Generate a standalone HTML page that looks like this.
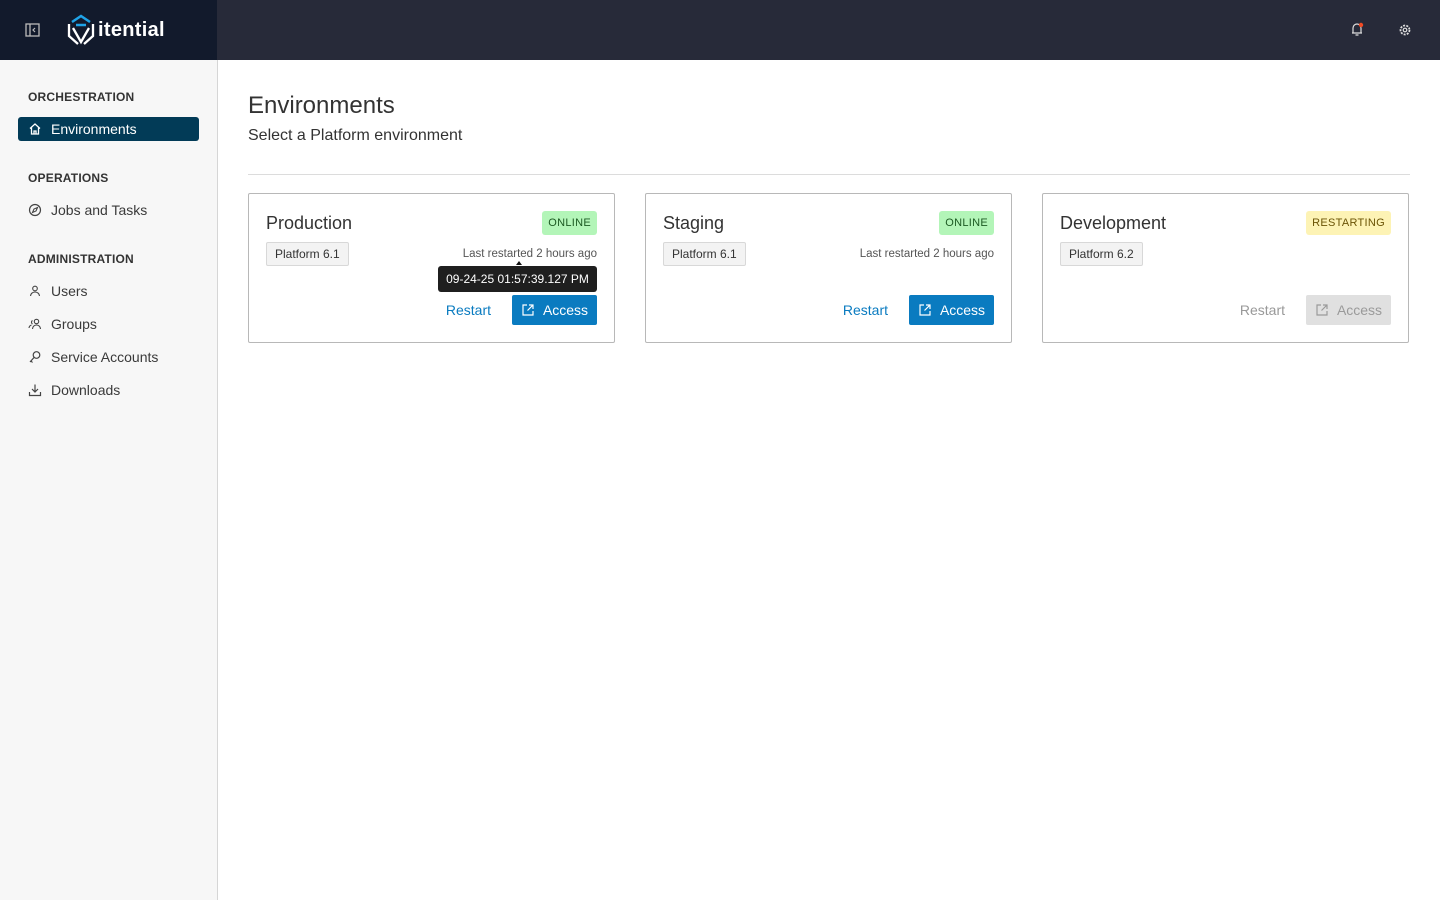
<!DOCTYPE html>
<html><head><meta charset="utf-8"><style>
*{box-sizing:border-box;margin:0;padding:0}
body{width:1440px;height:900px;position:relative;font-family:"Liberation Sans",sans-serif;background:#fff;color:#333;overflow:hidden}
.a{position:absolute;white-space:nowrap}
.top{left:0;top:0;width:1440px;height:60px;background:#272a39}
.topl{left:0;top:0;width:217px;height:60px;background:#121a2c}
.side{left:0;top:60px;width:218px;height:840px;background:#f7f7f7;border-right:1px solid #d6d6d6}
.sec{left:28px;font-size:12px;font-weight:bold;color:#333;letter-spacing:.2px}
.item{left:28px;font-size:14px;color:#3a3a3a;display:flex;align-items:center;gap:9px}
.card{top:193px;width:367px;height:150px;border:1px solid #b8b8b8;border-radius:2px;background:#fff}
.card h2{position:absolute;left:17px;top:19px;font-size:18px;font-weight:normal;color:#333}
.tag{position:absolute;left:17px;top:48px;height:24px;padding:0 8px;border:1px solid #d8d8d8;background:#f3f3f3;border-radius:2px;font-size:12px;line-height:22px;color:#333}
.badge{position:absolute;right:17px;top:17px;height:24px;padding:0 6px;border-radius:3px;font-size:11px;line-height:24px;letter-spacing:.3px}
.lr{position:absolute;right:17px;top:54px;font-size:11.5px;color:#555}
.restart{position:absolute;right:123px;top:108px;font-size:14px;color:#0a7bc0}
.btn{position:absolute;right:17px;top:101px;width:85px;height:30px;border-radius:2px;background:#0a7bc0;color:#fff;font-size:14px;display:flex;align-items:center;justify-content:center;gap:8px}
</style></head><body>
<div class="a top"></div><div class="a topl"></div>
<svg class="a" style="left:25px;top:23px" width="15" height="14" viewBox="0 0 15 14"><rect x="1" y="1" width="13" height="12" fill="none" stroke="#bbb" stroke-width="1.3"/><line x1="5" y1="1" x2="5" y2="13" stroke="#bbb" stroke-width="1.3"/><path d="M10 5 L8 7 L10 9" fill="none" stroke="#bbb" stroke-width="1.2"/></svg>
<svg class="a" style="left:66px;top:14px" width="30" height="32" viewBox="0 0 30 32"><path d="M6 8 L15 2 L24 8" fill="none" stroke="#1fa3e8" stroke-width="2.5"/><path d="M10 11 H20" stroke="#1fa3e8" stroke-width="2.5"/><path d="M3 10 V22 L12 30 M27 10 V22 L18 30 M7 14 L15 28 L23 14" fill="none" stroke="#fff" stroke-width="2.3"/></svg>
<div class="a" style="left:98px;top:19px;font-size:20px;color:#fff;font-weight:bold;letter-spacing:.3px">itential</div>
<svg class="a" style="left:1350px;top:22px" width="14" height="15" viewBox="0 0 14 15"><path d="M3 11 V6 a4 4 0 0 1 8 0 V11 H2 H12 M5.5 13 H8.5" fill="none" stroke="#ddd" stroke-width="1.2"/><circle cx="11" cy="3" r="2.2" fill="#f04a24"/></svg>
<svg class="a" style="left:1398px;top:23px" width="14" height="14" viewBox="0 0 14 14"><circle cx="7" cy="7" r="4.5" fill="none" stroke="#ddd" stroke-width="1.8" stroke-dasharray="2 1.2"/><circle cx="7" cy="7" r="1.8" fill="none" stroke="#ddd" stroke-width="1.2"/></svg>

<div class="a side"></div>
<div class="a sec" style="top:90px">ORCHESTRATION</div>
<div class="a" style="left:18px;top:117px;width:181px;height:24px;background:#023b57;border-radius:3px"></div>
<div class="a item" style="top:121px;color:#fff"><svg width="14" height="14" viewBox="0 0 14 14"><path d="M2 6.5 L7 2 L12 6.5 M3.5 5.5 V12 H10.5 V5.5 M6 12 V9 H8 V12" fill="none" stroke="#fff" stroke-width="1.3"/></svg>Environments</div>
<div class="a sec" style="top:171px">OPERATIONS</div>
<div class="a item" style="top:202px"><svg width="14" height="14" viewBox="0 0 14 14"><circle cx="7" cy="7" r="5.5" fill="none" stroke="#444" stroke-width="1.2"/><path d="M9.5 4.5 L8 8 L4.5 9.5 L6 6 Z" fill="none" stroke="#444" stroke-width="1.1"/></svg>Jobs and Tasks</div>
<div class="a sec" style="top:252px">ADMINISTRATION</div>
<div class="a item" style="top:283px"><svg width="14" height="14" viewBox="0 0 14 14"><circle cx="7" cy="4.5" r="2.3" fill="none" stroke="#444" stroke-width="1.1"/><path d="M2.5 12 a4.5 4 0 0 1 9 0" fill="none" stroke="#444" stroke-width="1.1"/></svg>Users</div>
<div class="a item" style="top:316px"><svg width="14" height="14" viewBox="0 0 14 14"><circle cx="8.5" cy="4.5" r="2.2" fill="none" stroke="#444" stroke-width="1.1"/><path d="M4.5 12 a4 4 0 0 1 8 0 M4.5 3.5 a2 2 0 0 0 0 3.5 M1 11 a3.5 3.5 0 0 1 2.5-3" fill="none" stroke="#444" stroke-width="1.1"/></svg>Groups</div>
<div class="a item" style="top:349px"><svg width="14" height="14" viewBox="0 0 14 14"><circle cx="8.5" cy="5" r="3.3" fill="none" stroke="#444" stroke-width="1.2"/><path d="M6 7.5 L2 12 M3 11 L4.5 12.5" fill="none" stroke="#444" stroke-width="1.2"/></svg>Service Accounts</div>
<div class="a item" style="top:382px"><svg width="14" height="14" viewBox="0 0 14 14"><path d="M7 1.5 V9 M4 6 L7 9 L10 6 M1.5 9 V12.5 H12.5 V9" fill="none" stroke="#444" stroke-width="1.2"/></svg>Downloads</div>

<div class="a" style="left:248px;top:92px;font-size:24px;color:#333">Environments</div>
<div class="a" style="left:248px;top:127px;font-size:16px;color:#333">Select a Platform environment</div>
<div class="a" style="left:248px;top:174px;width:1162px;height:1px;background:#dcdcdc"></div>

<div class="a card" style="left:248px">
<h2>Production</h2><div class="badge" style="background:#b3f5b8;color:#1d5a23">ONLINE</div>
<div class="tag">Platform 6.1</div><div class="lr">Last restarted 2 hours ago</div>
<div style="position:absolute;left:267px;top:67px;width:0;height:0;border:3px solid transparent;border-bottom:4px solid #111;border-top:0"></div>
<div style="position:absolute;right:17px;top:72px;width:159px;height:26px;background:#1f1f1f;border-radius:3px;color:#fff;font-size:12px;line-height:26px;text-align:center">09-24-25 01:57:39.127 PM</div>
<div class="restart">Restart</div>
<div class="btn"><svg width="14" height="14" viewBox="0 0 14 14"><path d="M6 2 H2 V12 H12 V8 M8 2 H12 V6 M12 2 L6.5 7.5" fill="none" stroke="#fff" stroke-width="1.2"/></svg>Access</div>
</div>

<div class="a card" style="left:645px">
<h2>Staging</h2><div class="badge" style="background:#b3f5b8;color:#1d5a23">ONLINE</div>
<div class="tag">Platform 6.1</div><div class="lr">Last restarted 2 hours ago</div>
<div class="restart">Restart</div>
<div class="btn"><svg width="14" height="14" viewBox="0 0 14 14"><path d="M6 2 H2 V12 H12 V8 M8 2 H12 V6 M12 2 L6.5 7.5" fill="none" stroke="#fff" stroke-width="1.2"/></svg>Access</div>
</div>

<div class="a card" style="left:1042px">
<h2>Development</h2><div class="badge" style="background:#fdf3b5;color:#6b5406">RESTARTING</div>
<div class="tag">Platform 6.2</div>
<div class="restart" style="color:#999">Restart</div>
<div class="btn" style="background:#e0e0e0;color:#9a9a9a"><svg width="14" height="14" viewBox="0 0 14 14"><path d="M6 2 H2 V12 H12 V8 M8 2 H12 V6 M12 2 L6.5 7.5" fill="none" stroke="#9a9a9a" stroke-width="1.2"/></svg>Access</div>
</div>
</body></html>
